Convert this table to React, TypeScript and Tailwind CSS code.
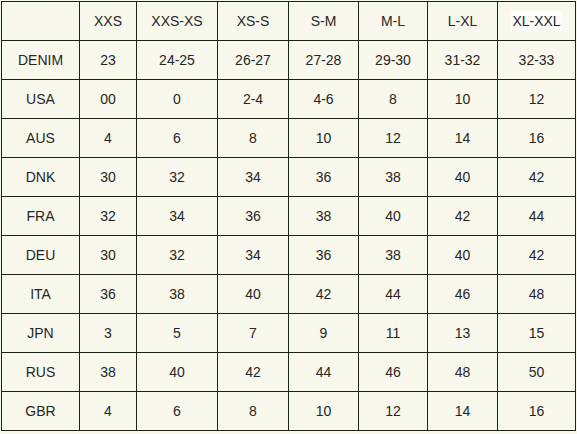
import React from "react";

const headers = ["", "XXS", "XXS-XS", "XS-S", "S-M", "M-L", "L-XL", "XL-XXL"];

const rows: string[][] = [
  ["DENIM", "23", "24-25", "26-27", "27-28", "29-30", "31-32", "32-33"],
  ["USA", "00", "0", "2-4", "4-6", "8", "10", "12"],
  ["AUS", "4", "6", "8", "10", "12", "14", "16"],
  ["DNK", "30", "32", "34", "36", "38", "40", "42"],
  ["FRA", "32", "34", "36", "38", "40", "42", "44"],
  ["DEU", "30", "32", "34", "36", "38", "40", "42"],
  ["ITA", "36", "38", "40", "42", "44", "46", "48"],
  ["JPN", "3", "5", "7", "9", "11", "13", "15"],
  ["RUS", "38", "40", "42", "44", "46", "48", "50"],
  ["GBR", "4", "6", "8", "10", "12", "14", "16"],
];

const widths = [78, 57, 81, 71, 70, 69, 70, 78];

const cell =
  "border-[1.5px] border-[#18261a] text-center align-middle p-0 h-[39px] font-normal";

export default function App() {
  return (
    <div className="w-[577px] h-[434px] bg-[#f9f8ed] pl-[1px] pt-[1px] font-['Liberation_Sans',Arial,sans-serif] text-[14px] text-[#262626]">
      <table className="border-collapse table-fixed w-[575px] bg-[#f9f8ed]">
        <colgroup>
          {widths.map((w, i) => (
            <col key={i} style={{ width: w }} />
          ))}
        </colgroup>
        <thead>
          <tr>
            {headers.map((h, i) => (
              <th key={i} className={cell}>
                {i === headers.length - 1 ? (
                  <span className="bg-[#fefefa] px-[1px] py-[2px]">{h}</span>
                ) : (
                  h
                )}
              </th>
            ))}
          </tr>
        </thead>
        <tbody>
          {rows.map((r, ri) => (
            <tr key={ri}>
              {r.map((v, ci) => (
                <td key={ci} className={cell}>
                  {v}
                </td>
              ))}
            </tr>
          ))}
        </tbody>
      </table>
    </div>
  );
}
